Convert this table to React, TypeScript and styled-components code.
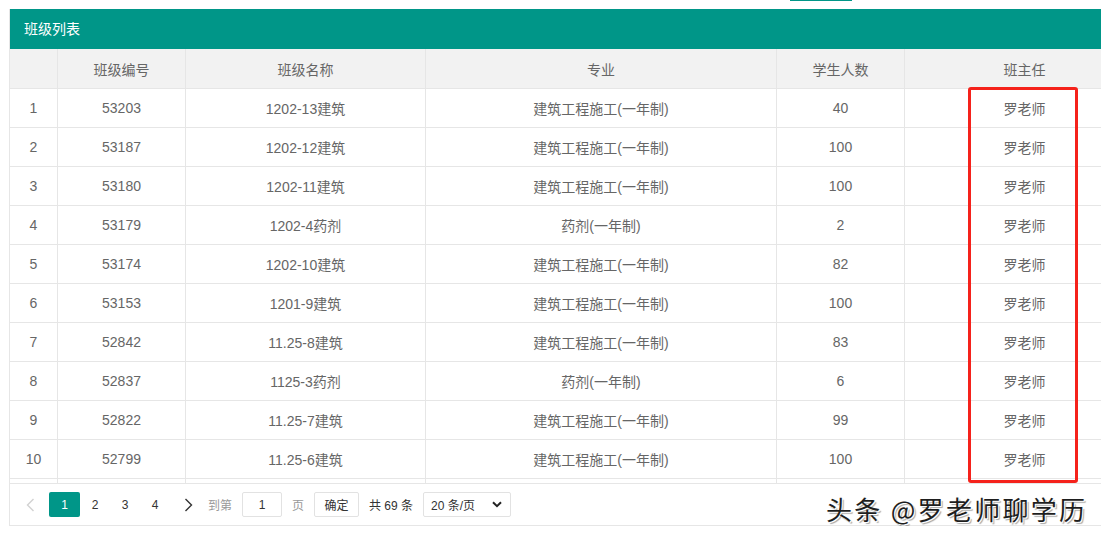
import React from "react";
import styled, { createGlobalStyle } from "styled-components";

const Global = createGlobalStyle`
  html, body { margin: 0; padding: 0; background: #fff; overflow: hidden; }
  body { font-family: "Liberation Sans", "Noto Sans CJK SC", sans-serif; }
`;

const COLS = "48px 128px 240px 351px 128px 240px";

const Page = styled.div`
  width: 1145px;
  padding-left: 9px;
`;

const TopStrip = styled.div`
  height: 9px;
  display: flex;
  align-items: flex-start;
`;

const TopTab = styled.div`
  margin-left: 781px;
  width: 62px;
  height: 1px;
  background: #009688;
`;

const Card = styled.div`
  position: relative;
  width: 1135px;
  border-left: 1px solid #e6e6e6;
  box-sizing: border-box;
`;

const CardTitle = styled.div`
  height: 40px;
  line-height: 40px;
  background: #009688;
  color: #fff;
  font-size: 14px;
  padding-left: 14px;
`;

const Row = styled.div<{ $head?: boolean }>`
  display: grid;
  grid-template-columns: ${COLS};
  height: ${(p) => (p.$head ? 40 : 39)}px;
  box-sizing: border-box;
  border-bottom: 1px solid #e6e6e6;
  background: ${(p) => (p.$head ? "#f2f2f2" : "#fff")};
`;

const Cell = styled.div`
  display: flex;
  align-items: center;
  justify-content: center;
  font-size: 14px;
  color: #666;
  border-right: 1px solid #e6e6e6;
  white-space: nowrap;
  overflow: hidden;
`;

const Body = styled.div`
  height: 394px;
  overflow: hidden;
`;

const Pager = styled.div`
  height: 43px;
  box-sizing: border-box;
  border-top: 1px solid #e6e6e6;
  border-bottom: 1px solid #e6e6e6;
  display: flex;
  align-items: center;
  padding-left: 5px;
  font-size: 12px;
  color: #333;
`;

const Arrow = styled.div<{ $w: number; $disabled?: boolean }>`
  width: ${(p) => p.$w}px;
  height: 25px;
  display: flex;
  align-items: center;
  justify-content: center;
  color: ${(p) => (p.$disabled ? "#d2d2d2" : "#333")};
`;

const PageNum = styled.div<{ $active?: boolean }>`
  width: ${(p) => (p.$active ? 31 : 30)}px;
  height: 25px;
  display: flex;
  align-items: center;
  justify-content: center;
  border-radius: 2px;
  background: ${(p) => (p.$active ? "#009688" : "transparent")};
  color: ${(p) => (p.$active ? "#fff" : "#333")};
`;

const Label = styled.span<{ $muted?: boolean; $ml: number }>`
  margin-left: ${(p) => p.$ml}px;
  color: ${(p) => (p.$muted ? "#999" : "#333")};
  white-space: pre;
`;

const BoxBase = styled.div<{ $w: number; $ml: number }>`
  margin-left: ${(p) => p.$ml}px;
  width: ${(p) => p.$w}px;
  height: 25px;
  box-sizing: border-box;
  border: 1px solid #e2e2e2;
  border-radius: 2px;
  display: flex;
  align-items: center;
  background: #fff;
`;

const InputBox = styled(BoxBase)`
  justify-content: center;
`;

const Btn = styled(BoxBase)`
  justify-content: center;
  color: #333;
`;

const Select = styled(BoxBase)`
  justify-content: space-between;
  padding: 0 8px 0 7px;
  color: #333;
`;

const RedBox = styled.div`
  position: absolute;
  left: 958px;
  top: 78px;
  width: 110px;
  height: 396px;
  box-sizing: border-box;
  border: 3px solid #f5221b;
  border-radius: 3px;
  pointer-events: none;
`;

const Watermark = styled.div`
  position: absolute;
  left: 816px;
  top: 483px;
  font-family: "Noto Sans CJK SC", sans-serif;
  font-size: 26px;
  line-height: 34px;
  color: #1e1e1e;
  letter-spacing: 2.3px;
  text-shadow: 1px 1px 0 #fff, 2px 2px 1px rgba(0, 0, 0, 0.35);
`;

const headers = ["", "班级编号", "班级名称", "专业", "学生人数", "班主任"];
const MAJ = "建筑工程施工(一年制)";
const PH = "药剂(一年制)";
const rows: [string, string, string, string, string][] = [
  ["53203", "1202-13建筑", MAJ, "40", "罗老师"],
  ["53187", "1202-12建筑", MAJ, "100", "罗老师"],
  ["53180", "1202-11建筑", MAJ, "100", "罗老师"],
  ["53179", "1202-4药剂", PH, "2", "罗老师"],
  ["53174", "1202-10建筑", MAJ, "82", "罗老师"],
  ["53153", "1201-9建筑", MAJ, "100", "罗老师"],
  ["52842", "11.25-8建筑", MAJ, "83", "罗老师"],
  ["52837", "1125-3药剂", PH, "6", "罗老师"],
  ["52822", "11.25-7建筑", MAJ, "99", "罗老师"],
  ["52799", "11.25-6建筑", MAJ, "100", "罗老师"],
  ["52790", "11.25-5建筑", MAJ, "100", "罗老师"],
];

const Chevron = ({ dir }: { dir: "left" | "right" }) => (
  <svg width="9" height="14" viewBox="0 0 9 14" fill="none">
    <path
      d={dir === "left" ? "M7.5 1 L1.5 7 L7.5 13" : "M1.5 1 L7.5 7 L1.5 13"}
      stroke="currentColor"
      strokeWidth="1.4"
    />
  </svg>
);

export default function App() {
  return (
    <Page>
      <Global />
      <TopStrip>
        <TopTab />
      </TopStrip>
      <Card>
        <CardTitle>班级列表</CardTitle>
        <Row $head>
          {headers.map((h, i) => (
            <Cell key={i}>{h}</Cell>
          ))}
        </Row>
        <Body>
          {rows.map((r, i) => (
            <Row key={i}>
              <Cell>{i + 1}</Cell>
              {r.map((c, j) => (
                <Cell key={j}>{c}</Cell>
              ))}
            </Row>
          ))}
        </Body>
        <Pager>
          <Arrow $w={30} $disabled>
            <Chevron dir="left" />
          </Arrow>
          <PageNum $active style={{ marginLeft: 4 }}>1</PageNum>
          <PageNum>2</PageNum>
          <PageNum>3</PageNum>
          <PageNum>4</PageNum>
          <Arrow $w={36}>
            <Chevron dir="right" />
          </Arrow>
          <Label $muted $ml={2}>到第</Label>
          <InputBox $w={40} $ml={10}>1</InputBox>
          <Label $muted $ml={10}>页</Label>
          <Btn $w={45} $ml={10}>确定</Btn>
          <Label $ml={10}>共 69 条</Label>
          <Select $w={88} $ml={10}>
            <span>20 条/页</span>
            <svg width="10" height="7" viewBox="0 0 10 7">
              <path d="M1 1.2 L5 5.2 L9 1.2" stroke="#222" strokeWidth="2" fill="none" />
            </svg>
          </Select>
        </Pager>
        <RedBox />
        <Watermark>头条 @罗老师聊学历</Watermark>
      </Card>
    </Page>
  );
}
